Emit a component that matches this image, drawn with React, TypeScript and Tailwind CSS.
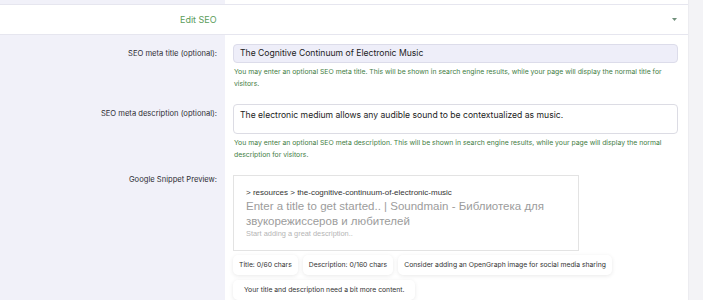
const chips = ["Title: 0/60 chars", "Description: 0/160 chars", "Consider adding an OpenGraph image for social media sharing"];

function Label({ text, className = "" }: { text: string; className?: string }) {
  return (
    <div className={`bg-[#f1f1f9] pr-[8px] text-right text-[7.6px] text-[#2f2f35] ${className}`}>
      {text}
    </div>
  );
}

function Help({ text }: { text: string }) {
  return <p className="mt-[3px] pl-[1px] text-[6.85px] leading-[12px] text-[#3f7d3f]">{text}</p>;
}

export default function App() {
  return (
    <div className="flex h-[300px] w-[703px] overflow-hidden bg-white font-['Inter',sans-serif]">
      <div className="w-[688px] shrink-0">
        <div className="grid h-[5px] grid-cols-[225px_1fr] border-b border-[#e6e6ef]">
          <div className="bg-[#f1f1f9]" />
          <div className="bg-white" />
        </div>

        <div className="flex h-[30px] items-center justify-between border-b border-[#e6e6ef] pr-[11px] pl-[180px]">
          <span className="text-[9px] text-[#5b9d5b]">Edit SEO</span>
          <svg width="5" height="3" viewBox="0 0 5 3">
            <path d="M0 0h5L2.5 3z" fill="#6f8f7a" />
          </svg>
        </div>

        <div className="grid grid-cols-[225px_1fr]">
          <Label text="SEO meta title (optional):" className="pt-[9px] leading-[19px]" />
          <div className="pt-[9px] pr-[10px] pb-[5px] pl-[8px]">
            <div className="flex h-[19px] items-center rounded-[4px] border border-[#dcdcea] bg-[#eeeef9] px-[6px] text-[8.6px] text-[#222]">
              The Cognitive Continuum of Electronic Music
            </div>
            <Help text="You may enter an optional SEO meta title. This will be shown in search engine results, while your page will display the normal title for visitors." />
          </div>

          <Label text="SEO meta description (optional):" className="pt-[14px] leading-[10px]" />
          <div className="pt-[9px] pr-[10px] pb-[5px] pl-[8px]">
            <div className="h-[30px] rounded-[4px] border border-[#dcdce4] bg-white px-[6px] pt-[5px] text-[8.6px] leading-[10px] text-[#222]">
              The electronic medium allows any audible sound to be contextualized as music.
            </div>
            <Help text="You may enter an optional SEO meta description. This will be shown in search engine results, while your page will display the normal description for visitors." />
          </div>

          <Label text="Google Snippet Preview:" className="pt-[9px] leading-[10px]" />
          <div className="pt-[9px] pl-[8px]">
            <div className="w-[346px] border border-[#e3e3e3] bg-white px-[12px] pt-[11px] pb-[11px] font-['Liberation_Sans',Arial,sans-serif]">
              <div className="text-[8px] leading-[12px] text-[#333]">
                &gt; resources &gt; the-cognitive-continuum-of-electronic-music
              </div>
              <div className="text-[11.5px] leading-[15px] text-[#9c9c9c]">
                Enter a title to get started.. | Soundmain - Библиотека для звукорежиссеров и любителей
              </div>
              <div className="text-[7.4px] leading-[10px] text-[#b5b5b5]">Start adding a great description..</div>
            </div>
            <div className="mt-[4px] flex flex-wrap gap-x-[5px] gap-y-[5px] text-[6.8px] text-[#333]">
              {chips.map((c) => (
                <span key={c} className="flex h-[20px] items-center rounded-[5px] bg-white px-[6px] shadow-[0_1px_4px_rgba(0,0,0,0.09)]">
                  {c}
                </span>
              ))}
              <span className="flex h-[20px] items-center rounded-[5px] bg-white px-[11px] shadow-[0_1px_4px_rgba(0,0,0,0.09)]">
                Your title and description need a bit more content.
              </span>
            </div>
          </div>
        </div>
      </div>
      <div className="flex-1 border-l border-[#ececf0] bg-[#f3f3f6]" />
    </div>
  );
}
